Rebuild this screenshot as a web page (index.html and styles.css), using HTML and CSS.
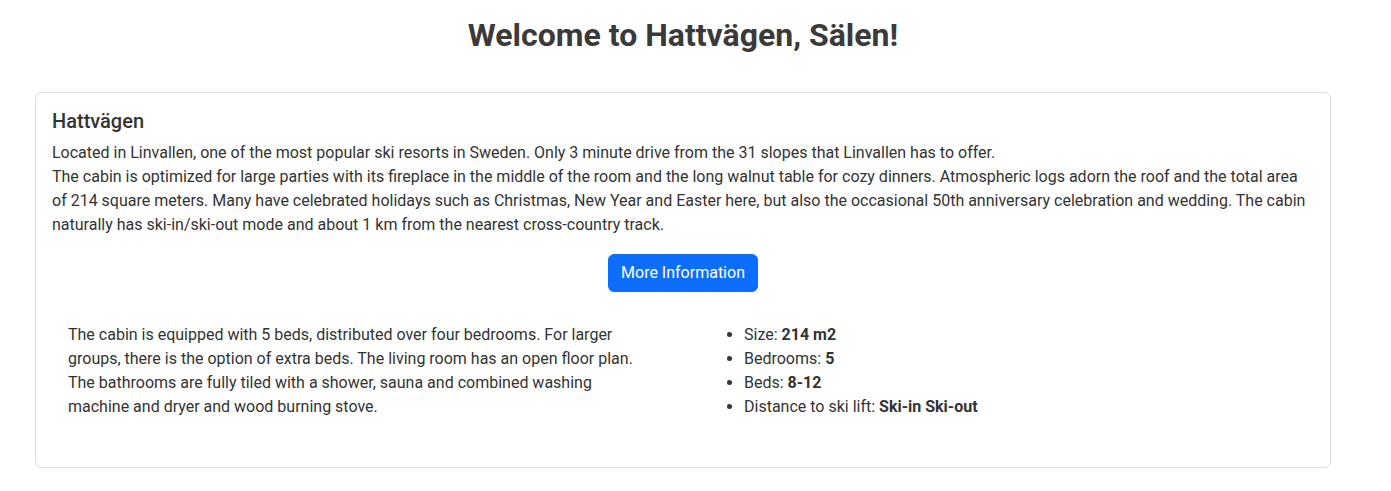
FILE: index.html
```html
<!DOCTYPE html>
<html lang="en">
<head>
<meta charset="utf-8">
<title>Welcome to Hattvägen, Sälen!</title>
<link rel="stylesheet" href="styles.css">
</head>
<body>
<main class="page">
  <h2 class="page-title">Welcome to Hattvägen, Sälen!</h2>
  <section class="card">
    <h5 class="card-title">Hattvägen</h5>
    <p class="card-text">Located in Linvallen, one of the most popular ski resorts in Sweden. Only 3 minute drive from the 31 slopes that Linvallen has to offer.<br>The cabin is optimized for large parties with its fireplace in the middle of the room and the long walnut table for cozy dinners. Atmospheric logs adorn the roof and the total area of 214 square meters. Many have celebrated holidays such as Christmas, New Year and Easter here, but also the occasional 50th anniversary celebration and wedding. The cabin naturally has ski-in/ski-out mode and about 1 km from the nearest cross-country track.</p>
    <div class="actions">
      <button class="btn" type="button">More Information</button>
    </div>
    <div class="details">
      <div class="details-text">
        <p>The cabin is equipped with 5 beds, distributed over four bedrooms. For larger groups, there is the option of extra beds. The living room has an open floor plan. The bathrooms are fully tiled with a shower, sauna and combined washing machine and dryer and wood burning stove.</p>
      </div>
      <div class="details-list">
        <ul>
          <li>Size: <b>214 m2</b></li>
          <li>Bedrooms: <b>5</b></li>
          <li>Beds: <b>8-12</b></li>
          <li>Distance to ski lift: <b>Ski-in Ski-out</b></li>
        </ul>
      </div>
    </div>
  </section>
</main>
</body>
</html>
```

FILE: styles.css
```css
* { box-sizing: border-box; }

body {
  margin: 0;
  font-family: Roboto, "Liberation Sans", sans-serif;
  font-size: 16px;
  line-height: 24px;
  color: #333;
  background: #fff;
}

.page {
  width: 1296px;
  margin-left: 35px;
  padding-top: 16px;
}

.page-title {
  margin: 0 0 38px;
  font-size: 32px;
  line-height: 38.4px;
  font-weight: 700;
  text-align: center;
  color: #3a3a3a;
}

.card {
  border: 1px solid #dcdcdc;
  border-radius: 6px;
  padding: 16px;
}

.card-title {
  margin: 0 0 8px;
  font-size: 20px;
  line-height: 24px;
  font-weight: 500;
}

.card-text {
  margin: 0;
}

.actions {
  display: flex;
  justify-content: center;
  margin-top: 17px;
  margin-bottom: 16px;
}

.btn {
  font-family: inherit;
  font-size: 16px;
  line-height: 24px;
  color: #fff;
  background: #0d6efd;
  border: 1px solid #0d6efd;
  border-radius: 6px;
  padding: 6px 12px;
  cursor: pointer;
}

.details {
  display: grid;
  grid-template-columns: 644px 1fr;
  padding: 15px 16px 16px;
}

.details-text {
  padding-right: 64px;
}

.details-text p {
  margin: 0 0 16px;
}

.details-list ul {
  margin: 0 0 16px;
  padding-left: 32px;
}

.details-list b {
  font-weight: 700;
}
```
